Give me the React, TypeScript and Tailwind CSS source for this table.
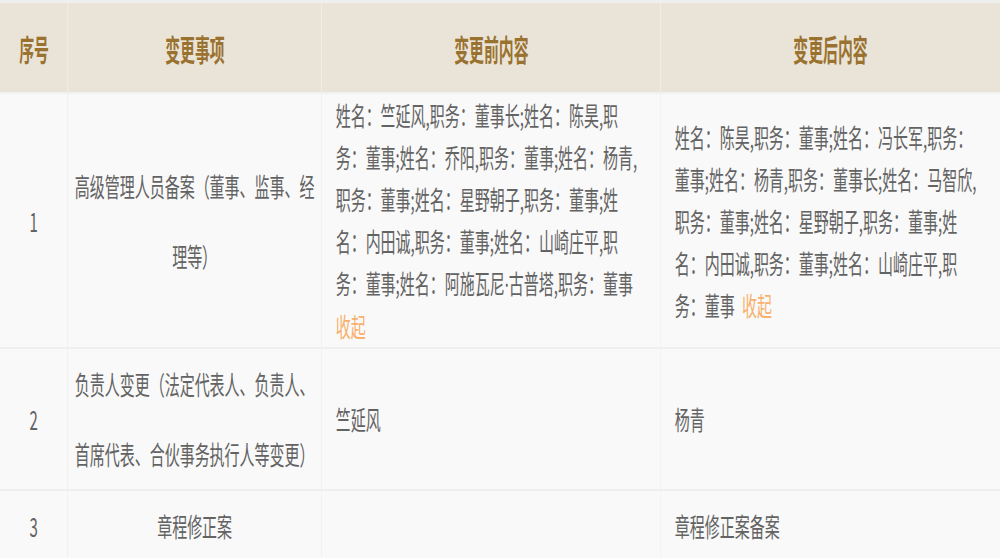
import React from "react";

const FONT = { fontFamily: '"Noto Sans CJK SC", "Noto Sans", sans-serif' };

function More() {
  return (
    <>
      <span className="[word-spacing:7px]"> </span>
      <span className="text-[#f8b06c]">收起</span>
    </>
  );
}

const headers = ["序号", "变更事项", "变更前内容", "变更后内容"];

export default function App() {
  return (
    <div className="w-[1000px] h-[558px] overflow-hidden bg-[#f9f9f9]" style={FONT}>
      <div className="w-[1734px] origin-top-left scale-x-[0.5767]">
        <div className="h-[3px] bg-[#efefef]" />
        {/* header */}
        <div className="grid grid-cols-[118px_440px_588px_588px] h-[89px] bg-[#eae4d8]">
          {headers.map((h, i) => (
            <div
              key={h}
              className={`flex items-center justify-center ${i < 3 ? "border-r border-[#f6f3ee]" : ""}`}
            >
              <span className="inline-block text-[30px] font-bold text-[#9a7230] scale-x-[0.86] leading-none">
                {h}
              </span>
            </div>
          ))}
        </div>
        <div className="h-[2px] bg-[#f1f1f1]" />
        {/* body */}
        <div className="text-[26px] text-[#636363]">
          {/* row 1 */}
          <div className="grid grid-cols-[118px_440px_588px_588px] border-b-2 border-[#efefef]">
            <div className="flex items-center justify-center border-r border-[#ededed] leading-[70px]">1</div>
            <div className="flex items-center justify-center border-r border-[#ededed] px-[11px] text-center leading-[70px]">
              高级管理人员备案（董事、监事、经理等）
            </div>
            <div className="flex items-center border-r border-[#ededed] pl-[24px] pr-[34px] leading-[42px]">
              <p>
                姓名：竺延风,职务：董事长;姓名：陈昊,职务：董事;姓名：乔阳,职务：董事;姓名：杨青,职务：董事;姓名：星野朝子,职务：董事;姓名：内田诚,职务：董事;姓名：山崎庄平,职务：董事;姓名：阿施瓦尼
                <span className="font-['Noto_Sans',sans-serif]">·</span>
                古普塔,职务：董事<More />
              </p>
            </div>
            <div className="flex items-center pl-[24px] pr-[34px] leading-[42px]">
              <p>
                姓名：陈昊,职务：董事;姓名：冯长军,职务：董事;姓名：杨青,职务：董事长;姓名：马智欣,职务：董事;姓名：星野朝子,职务：董事;姓名：内田诚,职务：董事;姓名：山崎庄平,职务：董事<More />
              </p>
            </div>
          </div>
          {/* row 2 */}
          <div className="grid grid-cols-[118px_440px_588px_588px] border-b-2 border-[#efefef]">
            <div className="flex items-center justify-center border-r border-[#ededed] leading-[70px]">2</div>
            <div className="flex items-center justify-center border-r border-[#ededed] px-[11px] text-center leading-[70px]">
              负责人变更（法定代表人、负责人、首席代表、合伙事务执行人等变更）
            </div>
            <div className="flex items-center border-r border-[#ededed] pl-[24px] pr-[34px] leading-[42px]">
              竺延风
            </div>
            <div className="flex items-center pl-[24px] pr-[34px] leading-[42px]">杨青</div>
          </div>
          {/* row 3 */}
          <div className="grid grid-cols-[118px_440px_588px_588px] border-b-2 border-[#efefef]">
            <div className="flex items-center justify-center border-r border-[#ededed] leading-[70px]">3</div>
            <div className="flex items-center justify-center border-r border-[#ededed] px-[11px] text-center leading-[70px]">
              章程修正案
            </div>
            <div className="flex items-center border-r border-[#ededed] pl-[24px] pr-[34px] leading-[42px]" />
            <div className="flex items-center pl-[24px] pr-[34px] leading-[42px]">章程修正案备案</div>
          </div>
        </div>
      </div>
    </div>
  );
}
